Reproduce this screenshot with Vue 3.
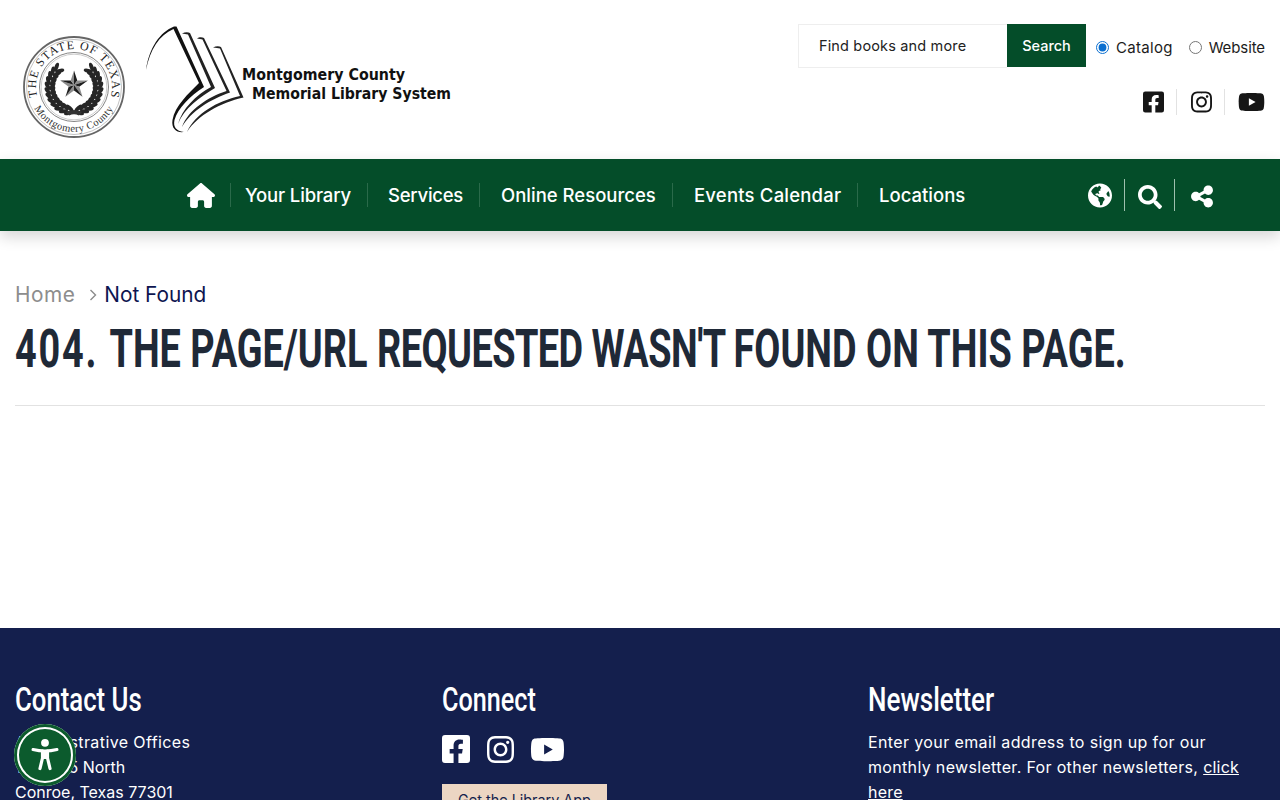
<script setup>
const icons = {
  fb: { vb: '0 0 448 512', d: 'M400 32H48A48 48 0 0 0 0 80v352a48 48 0 0 0 48 48h137.250V327.690h-63V256h63v-54.640c0-62.150 37-96.480 93.670-96.480 27.140 0 55.520 4.840 55.520 4.840v61h-31.270c-30.810 0-40.420 19.120-40.420 38.730V256h68.780l-11 71.690h-57.780V480H400a48 48 0 0 0 48-48V80a48 48 0 0 0-48-48z' },
  ig: { vb: '0 0 448 512', d: 'M224.100 141c-63.600 0-114.900 51.300-114.900 114.900s51.300 114.900 114.900 114.900S339 319.500 339 255.900 287.700 141 224.100 141zm0 189.600c-41.100 0-74.700-33.500-74.700-74.700s33.500-74.700 74.700-74.700 74.700 33.500 74.700 74.700-33.600 74.700-74.700 74.700zm146.400-194.300c0 14.900-12 26.800-26.800 26.800-14.900 0-26.800-12-26.800-26.800s12-26.800 26.800-26.800 26.800 12 26.800 26.800zm76.100 27.200c-1.700-35.900-9.900-67.700-36.200-93.900-26.200-26.200-58-34.400-93.900-36.200-37-2.100-147.900-2.100-184.900 0-35.800 1.700-67.600 9.900-93.900 36.100s-34.400 58-36.200 93.900c-2.100 37-2.100 147.900 0 184.900 1.700 35.900 9.900 67.700 36.200 93.900s58 34.400 93.900 36.200c37 2.100 147.900 2.100 184.900 0 35.900-1.700 67.700-9.900 93.900-36.200 26.200-26.200 34.400-58 36.200-93.900 2.100-37 2.100-147.800 0-184.800zM398.800 388c-7.800 19.600-22.900 34.700-42.600 42.600-29.500 11.700-99.500 9-132.100 9s-102.700 2.600-132.100-9c-19.600-7.800-34.700-22.900-42.600-42.600-11.700-29.500-9-99.500-9-132.100s-2.600-102.700 9-132.100c7.800-19.600 22.900-34.700 42.600-42.600 29.500-11.700 99.500-9 132.100-9s102.700-2.600 132.100 9c19.600 7.800 34.700 22.900 42.600 42.600 11.700 29.500 9 99.500 9 132.100s2.700 102.700-9 132.100z' },
  yt: { vb: '0 0 576 512', d: 'M549.655 124.083c-6.281-23.65-24.787-42.276-48.284-48.597C458.781 64 288 64 288 64S117.22 64 74.629 75.486c-23.497 6.322-42.003 24.947-48.284 48.597-11.412 42.867-11.412 132.305-11.412 132.305s0 89.438 11.412 132.305c6.281 23.65 24.787 41.5 48.284 47.821C117.22 448 288 448 288 448s170.78 0 213.371-11.486c23.497-6.321 42.003-24.171 48.284-47.821 11.412-42.867 11.412-132.305 11.412-132.305s0-89.438-11.412-132.305zm-317.51 213.508V175.185l142.739 81.205-142.739 81.201z' },
  home: { vb: '0 0 576 512', d: 'M575.800 255.500c0 18-15 32.100-32 32.100h-32l.7 160.200c0 2.700-.2 5.400-.5 8.100V472c0 22.100-17.900 40-40 40H456c-1.100 0-2.200 0-3.300-.1c-1.400 .1-2.800 .1-4.200 .1H416 392c-22.100 0-40-17.900-40-40V448 384c0-17.700-14.300-32-32-32H256c-17.700 0-32 14.300-32 32v64 24c0 22.100-17.900 40-40 40H160 128.100c-1.500 0-3-.1-4.500-.2c-1.200 .1-2.400 .2-3.600 .2H104c-22.100 0-40-17.900-40-40V360c0-.9 0-1.900 .1-2.800V287.600H32c-18 0-32-14-32-32.100c0-9 3-17 10-24L266.400 8c7-7 15-8 22-8s15 2 21 7L564.800 231.500c8 7 12 15 11 24z' },
  search: { vb: '0 0 512 512', d: 'M505 442.700L405.300 343c-4.500-4.500-10.600-7-17-7H372c27.600-35.300 44-79.700 44-128C416 93.100 322.900 0 208 0S0 93.100 0 208s93.100 208 208 208c48.300 0 92.700-16.400 128-44v16.300c0 6.400 2.500 12.500 7 17l99.700 99.700c9.400 9.400 24.600 9.400 33.900 0l28.300-28.300c9.400-9.400 9.400-24.600.1-34zM208 336c-70.700 0-128-57.200-128-128 0-70.700 57.200-128 128-128 70.700 0 128 57.200 128 128 0 70.700-57.200 128-128 128z' },
  share: { vb: '0 0 448 512', d: 'M352 224c53 0 96-43 96-96s-43-96-96-96s-96 43-96 96c0 4 .2 8 .7 11.900l-94.100 47C145.400 170.200 121.900 160 96 160c-53 0-96 43-96 96s43 96 96 96c25.900 0 49.400-10.200 66.600-26.900l94.100 47c-.5 3.900-.7 7.800-.7 11.900c0 53 43 96 96 96s96-43 96-96s-43-96-96-96c-25.900 0-49.400 10.200-66.600 26.900l-94.100-47c.5-3.900 .7-7.800 .7-11.900s-.2-8-.7-11.900l94.100-47C302.600 213.800 326.100 224 352 224z' },
  globe: { vb: '0 0 496 512', d: 'M248 8C111.030 8 0 119.030 0 256s111.030 248 248 248 248-111.030 248-248S384.970 8 248 8zm82.290 357.600c-3.900 3.880-7.990 7.950-11.310 11.280-2.990 3-5.100 6.700-6.170 10.710-1.510 5.660-2.730 11.380-4.770 16.870l-17.390 46.850c-13.760 3-28 4.690-42.650 4.690v-27.380c1.690-12.620-7.640-36.260-22.630-51.250-6-6-9.370-14.140-9.370-22.630v-32.010c0-11.640-6.270-22.340-16.460-27.970-14.370-7.950-34.810-19.060-48.810-26.110-11.480-5.780-22.100-13.140-31.650-21.750l-.8-.72a114.792 114.792 0 0 1-18.060-20.740c-9.380-13.770-24.660-36.420-34.590-51.140 20.470-45.500 57.360-82.040 103.200-101.890l24.010 12.010C203.480 89.740 216 82.010 216 70.110v-11.300c7.990-1.290 16.120-2.110 24.390-2.420l28.300 28.300c6.250 6.250 6.250 16.380 0 22.630L264 112l-10.340 10.340c-3.120 3.120-3.120 8.190 0 11.310l4.690 4.690c3.120 3.120 3.120 8.190 0 11.310l-8 8a8.008 8.008 0 0 1-5.660 2.340h-8.990c-2.080 0-4.080.81-5.580 2.270l-9.920 9.650a8.008 8.008 0 0 0-1.580 9.310l15.590 31.190c2.660 5.320-1.210 11.580-7.150 11.580h-5.640c-1.930 0-3.790-.7-5.240-1.960l-9.280-8.060a16.017 16.017 0 0 0-15.550-3.100l-31.170 10.390a11.950 11.950 0 0 0-8.170 11.340c0 4.530 2.560 8.660 6.610 10.690l11.080 5.540c9.410 4.710 19.790 7.160 30.310 7.160s22.590 27.290 32 32h66.750c8.490 0 16.620 3.370 22.630 9.370l13.690 13.690a30.503 30.503 0 0 1 8.930 21.570 46.536 46.536 0 0 1-13.720 32.980zM417 274.250c-5.790-1.450-10.840-5-14.150-9.970l-17.980-26.970a23.970 23.970 0 0 1 0-26.620l19.590-29.380c2.320-3.470 5.500-6.290 9.240-8.150l12.980-6.490C440.200 193.590 448 223.870 448 256c0 8.670-.74 17.160-1.820 25.540L417 274.250z' }
}
const navLinks = ['Your Library', 'Services', 'Online Resources', 'Events Calendar', 'Locations']

const cx = 74
const cy = 87
const leaves = []
for (const side of [-1, 1]) {
  for (let i = 0; i < 12; i++) {
    const th = 168 - i * 11.500
    const rad = th * Math.PI / 180
    for (const [r, tilt] of [[21.500, -28], [26.500, 28]]) {
      const x = cx + side * r * Math.sin(rad)
      const y = cy - r * Math.cos(rad)
      const deg = side * (th - 90 + tilt)
      leaves.push({ key: `${side}-${i}-${r}`, transform: `translate(${x.toFixed(2)} ${y.toFixed(2)}) rotate(${deg.toFixed(1)})` })
    }
  }
}
const starFacets = []
for (let i = 0; i < 10; i++) {
  const pt = (k) => {
    const a = (k * 36 - 90) * Math.PI / 180
    const r = k % 2 === 0 ? 14.500 : 5.600
    return `${(cx + r * Math.cos(a)).toFixed(2)},${(cy - 2 + r * Math.sin(a)).toFixed(2)}`
  }
  starFacets.push({ key: i, points: `${cx},${cy - 2} ${pt(i)} ${pt(i + 1)}`, fill: i % 2 === 0 ? '#1d1d1d' : '#8c8c8c' })
}
</script>

<template>
  <div class="page">
    <header class="top">
      <svg class="logo" width="470" height="159" viewBox="0 0 470 159" role="img" aria-label="Montgomery County Memorial Library System">
        <defs>
          <path id="sealTop" d="M 37.300 96.800 A 38 38 0 1 1 110.700 96.800" />
          <path id="sealBottom" d="M 34.300 108.100 A 45 45 0 0 0 113.700 108.100" />
        </defs>
        <g class="seal">
          <circle cx="74" cy="87" r="50" fill="none" stroke="#666" stroke-width="1.800" />
          <circle cx="74" cy="87" r="47.500" fill="none" stroke="#999" stroke-width=".6" />
          <circle cx="74" cy="87" r="34.500" fill="none" stroke="#777" stroke-width=".9" />
          <circle cx="74" cy="87" r="32.800" fill="none" stroke="#aaa" stroke-width=".6" />
          <text class="seal-top"><textPath href="#sealTop" textLength="139" lengthAdjust="spacing">THE STATE OF TEXAS</textPath></text>
          <text class="seal-bot"><textPath href="#sealBottom" textLength="96" lengthAdjust="spacing">Montgomery County</textPath></text>
          <ellipse v-for="l in leaves" :key="l.key" :transform="l.transform" rx="2" ry="4.600" fill="#262626" />
          <path d="M66 112q8 -4 16 0l-3 3.500q-5 -2.500 -10 0z" fill="#333" />
          <polygon v-for="f in starFacets" :key="f.key" :points="f.points" :fill="f.fill" />
        </g>
        <g class="book">
          <path d="M146 70C149 48 160 32 174 26.500L176.500 26.500L204 87C190 96 178 108 174.500 120C173 127 176 131 184 132C177 133 171 129 172.500 120C175 106 188 94 199 83L173.500 29C159 35 150 50 146 70Z" fill="#111" />
          <path d="M182 33.500C185 32 188 32 190 33L215 88C200 97 184 108 178 124C182 109 196 95 211 87L188 34.500C186 34 184 34 182 33.500Z" fill="#222" />
          <path d="M197 38.500C199 37 202 37 204 38L230 92.500C211 99 191 111 182 127C188 110 208 97 226.500 91L202.500 39.500C201 39 199 39 197 38.500Z" fill="#222" />
          <path d="M213 47.500C216 46 219 46 221 47L243.500 97.500C220 103 198 115 187 132C195 114 217 101 240 96L220 48.500C218 48 216 48 213 47.500Z" fill="#222" />
        </g>
        <text class="brand" x="242" y="79.500" textLength="163" lengthAdjust="spacingAndGlyphs">Montgomery County</text>
        <text class="brand" x="252" y="98.500" textLength="199" lengthAdjust="spacingAndGlyphs">Memorial Library System</text>
      </svg>

      <div class="tools">
        <form class="search-row" @submit.prevent>
          <input class="search-input" type="text" placeholder="Find books and more" />
          <button class="search-btn" type="submit">Search</button>
          <label class="radio radio-first"><input type="radio" name="where" checked />Catalog</label>
          <label class="radio radio-second"><input type="radio" name="where" />Website</label>
        </form>
        <div class="social-top">
          <a class="soc"><svg class="s-fb" :viewBox="icons.fb.vb"><path :d="icons.fb.d" /></svg></a>
          <a class="soc"><svg class="s-ig" :viewBox="icons.ig.vb"><path :d="icons.ig.d" /></svg></a>
          <a class="soc"><svg class="s-yt" :viewBox="icons.yt.vb"><path :d="icons.yt.d" /></svg></a>
        </div>
      </div>
    </header>

    <nav class="nav">
      <div class="nav-main">
        <a class="nav-home"><svg :viewBox="icons.home.vb"><path :d="icons.home.d" /></svg></a>
        <a v-for="link in navLinks" :key="link" class="nav-link">{{ link }}</a>
      </div>
      <div class="nav-tools">
        <a class="nav-tool t-globe"><svg :viewBox="icons.globe.vb"><path :d="icons.globe.d" /></svg></a>
        <a class="nav-tool t-search"><svg :viewBox="icons.search.vb"><path :d="icons.search.d" /></svg></a>
        <a class="nav-tool t-share"><svg :viewBox="icons.share.vb"><path :d="icons.share.d" /></svg></a>
      </div>
    </nav>

    <main class="content">
      <div class="crumbs">
        <a class="crumb-home">Home</a>
        <svg class="crumb-sep" width="8" height="12" viewBox="0 0 8 12"><path d="M1.500 1l5 5-5 5" fill="none" stroke="#8b8b8b" stroke-width="1.400" /></svg>
        <span class="crumb-here">Not Found</span>
      </div>
      <h1 class="title"><span class="title-inner"><span class="t-a">404. </span>THE PAGE/URL <span class="t-b">REQUESTED WASN'T </span>FOUND ON THIS PAGE.</span></h1>
    </main>

    <footer class="footer">
      <section class="col">
        <h2><span class="h-contact">Contact Us</span></h2>
        <p><span class="wide">Administrative Offices</span><br />104 I-45 North<br />Conroe, Texas 77301</p>
      </section>
      <section class="col">
        <h2><span class="h-connect">Connect</span></h2>
        <div class="social-foot">
          <a><svg class="f-fb" :viewBox="icons.fb.vb"><path :d="icons.fb.d" /></svg></a>
          <a><svg class="f-ig" :viewBox="icons.ig.vb"><path :d="icons.ig.d" /></svg></a>
          <a><svg class="f-yt" :viewBox="icons.yt.vb"><path :d="icons.yt.d" /></svg></a>
        </div>
        <a class="app-btn">Get the Library App</a>
      </section>
      <section class="col col-news">
        <h2><span class="h-news">Newsletter</span></h2>
        <p class="news-text">Enter your email address to sign up for our<br /><span class="news-line">monthly newsletter. For other newsletters, </span><a class="link">click<br />here</a></p>
      </section>
    </footer>

    <button class="a11y" aria-label="Accessibility options">
      <svg width="36" height="36" viewBox="0 0 36 36">
        <circle cx="18" cy="5.800" r="3.900" fill="#fff" />
        <path d="M6 12.500c4 1 8 1.500 12 1.500s8-.5 12-1.500" fill="none" stroke="#fff" stroke-width="3" stroke-linecap="round" />
        <path d="M15.500 14v7L13 31.500M20.500 14v7L23 31.500" fill="none" stroke="#fff" stroke-width="3.200" stroke-linecap="round" stroke-linejoin="round" />
        <path d="M15 14h6v8h-6z" fill="#fff" />
      </svg>
    </button>
  </div>
</template>

<style>
html, body { margin: 0; background: #fff; }
</style>

<style scoped>
.page {
  position: relative;
  height: 800px;
  overflow: hidden;
  font-family: Inter, "Open Sans", sans-serif;
  color: #111;
}
.top {
  display: flex;
  justify-content: space-between;
  height: 159px;
  padding-right: 15px;
}
.logo { display: block; flex: none; }
.seal-top { font: 12px "Liberation Serif", serif; fill: #222; }
.seal-bot { font: 10.500px "Liberation Serif", serif; fill: #333; }
.brand { font: 700 15.500px "DejaVu Sans", sans-serif; fill: #111; }

.tools { display: flex; flex-direction: column; align-items: flex-end; padding-top: 24px; }
.search-row { display: flex; align-items: flex-start; }
.search-input {
  box-sizing: border-box;
  width: 209px;
  height: 44px;
  padding: 0 20px 2px;
  border: 1px solid #eee;
  border-right: 0;
  font: 14.500px Inter, sans-serif;
  letter-spacing: .16px;
  outline: none;
}
.search-input::placeholder { color: #222; opacity: 1; }
.search-btn {
  width: 79px;
  height: 43px;
  padding: 0;
  border: 0;
  background: #044d29;
  color: #fff;
  font: 500 14.500px Inter, sans-serif;
}
.radio { display: flex; align-items: center; height: 46px; font-size: 15px; color: #1c1c1c; white-space: nowrap; }
.radio input { width: 13px; height: 13px; margin: 0 7px 0 0; accent-color: #0a6fd0; }
.radio-first { margin-left: 10px; letter-spacing: .3px; }
.radio-second { margin-left: 16px; letter-spacing: -.1px; }

.social-top { display: flex; align-items: center; margin-top: 19px; height: 26px; }
.soc { display: flex; align-items: center; justify-content: center; height: 26px; padding: 0 12px 0 14px; border-left: 1px solid #e2e2e2; }
.soc:first-child { border-left: 0; padding-left: 0; }
.soc:last-child { padding: 0 0 0 13px; }
.soc svg { display: block; fill: #161616; }
.s-fb { width: 21px; height: 24px; }
.s-ig { width: 21px; height: 24px; }
.s-yt { width: 27px; height: 24px; }

.nav {
  position: relative;
  display: flex;
  justify-content: space-between;
  align-items: center;
  height: 72px;
  background: #044d29;
  box-shadow: 0 6px 14px rgba(0, 0, 0, .16);
}
.nav-main {
  display: grid;
  grid-template-columns: 44px 137px 112px 193px 185px 110px;
  align-items: center;
  margin-left: 187px;
}
.nav-home { display: flex; height: 24px; align-items: center; border-right: 1px solid #2a6a4a; }
.nav-home svg { width: 28px; height: 25px; fill: #fff; }
.nav-link {
  display: flex;
  align-items: center;
  height: 24px;
  padding-left: 21px;
  border-right: 1px solid #2a6a4a;
  color: #fff;
  font-size: 18.500px;
  font-weight: 500;
  white-space: nowrap;
}
.nav-link:nth-child(2) { padding-left: 14px; letter-spacing: -.16px; }
.nav-link:nth-child(3) { padding-left: 20px; letter-spacing: -.25px; }
.nav-link:nth-child(5) { letter-spacing: .2px; }
.nav-link:last-child { border-right: 0; }
.nav-tools { display: flex; align-items: center; margin-right: 67px; }
.nav-tool { display: flex; align-items: center; height: 32px; }
.nav-tool svg { display: block; fill: #fff; }
.t-globe { padding-right: 12px; border-right: 1px solid #9fc0ae; }
.t-globe svg { width: 24px; height: 27px; }
.t-search { padding: 3px 12px 0 13px; height: 29px; border-right: 1px solid #9fc0ae; }
.t-search svg { width: 24px; height: 24px; }
.t-share { padding: 2px 0 0 16px; height: 30px; }
.t-share svg { width: 22px; height: 25px; }

.content { box-sizing: border-box; height: 397px; margin: 0 15px; padding-top: 48px; }
.crumbs { display: flex; align-items: center; height: 30px; font-size: 20.800px; }
.crumb-home { color: #8d8d8d; letter-spacing: .5px; }
.crumb-sep { margin: 2px 7px 0 14px; }
.crumb-here { color: #0d1550; }
.title {
  box-sizing: border-box;
  height: 97px;
  margin: 0;
  padding-top: 10px;
  border-bottom: 1px solid #e2e2e2;
  font-family: Roboto, "Liberation Sans", sans-serif;
  font-size: 53px;
  font-weight: 700;
  line-height: 60px;
  color: #1f2937;
  white-space: nowrap;
}
.title-inner {
  display: inline-block;
  transform: scaleX(.714);
  transform-origin: left center;
}
.t-a { letter-spacing: 2.500px; }
.t-b { letter-spacing: -.74px; }

.footer {
  display: grid;
  grid-template-columns: repeat(3, 417px);
  gap: 10px;
  height: 300px;
  padding: 50px 15px 0;
  background: #141f4d;
  color: #fff;
}
.col h2 {
  margin: 0 0 8px;
  font-family: Roboto, "Liberation Sans", sans-serif;
  font-size: 33px;
  font-weight: 500;
  line-height: 44px;
  white-space: nowrap;
}
.col h2 span { display: inline-block; transform-origin: left center; }
.h-contact { transform: scaleX(.78); }
.h-connect { transform: scaleX(.764); }
.h-news { transform: scaleX(.789); }
.col-news { margin-left: -1px; }
.col p { margin: 0; font-size: 16px; line-height: 25px; white-space: nowrap; }
.wide { letter-spacing: .4px; }
.col .news-text { letter-spacing: .38px; }
.news-line { letter-spacing: .33px; }
.link { text-decoration: underline; letter-spacing: .2px; }
.social-foot { display: flex; align-items: center; gap: 17px; height: 28px; margin-top: 13px; }
.social-foot a { display: flex; }
.social-foot svg { display: block; fill: #fff; }
.f-fb { width: 28px; height: 32px; }
.f-ig { width: 27px; height: 31px; }
.f-yt { width: 35px; height: 31px; margin-left: -1px; }
.app-btn {
  display: block;
  box-sizing: border-box;
  width: 165px;
  height: 40px;
  margin-top: 21px;
  padding-top: 7px;
  background: #ecd6c3;
  color: #141f4d;
  font-size: 14.400px;
  text-align: center;
}
.a11y {
  position: absolute;
  left: 14px;
  top: 724px;
  display: flex;
  align-items: center;
  justify-content: center;
  box-sizing: border-box;
  width: 62px;
  height: 62px;
  padding: 0;
  border: 0;
  border-radius: 50%;
  background: #0c5b2d;
  box-shadow: inset 0 0 0 3px #0c5b2d, inset 0 0 0 5px #fff;
}
</style>
